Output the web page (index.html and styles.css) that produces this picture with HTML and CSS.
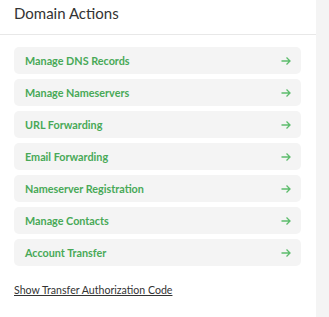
FILE: index.html
```html
<!DOCTYPE html>
<html lang="en">
<head>
    <meta charset="UTF-8">
    <title>Domain Actions</title>
    <link rel="stylesheet" href="styles.css">
</head>
<body>
    <div class="layout">
        <div class="panel">
            <div class="panel-header">Domain Actions</div>
            <ul class="action-list">
                <li class="action-item"><span>Manage DNS Records</span><svg class="arrow" viewBox="0 0 10 10"><path d="M0.5 5H9M5.5 1.5L9 5L5.5 8.5"/></svg></li>
                <li class="action-item"><span>Manage Nameservers</span><svg class="arrow" viewBox="0 0 10 10"><path d="M0.5 5H9M5.5 1.5L9 5L5.5 8.5"/></svg></li>
                <li class="action-item"><span>URL Forwarding</span><svg class="arrow" viewBox="0 0 10 10"><path d="M0.5 5H9M5.5 1.5L9 5L5.5 8.5"/></svg></li>
                <li class="action-item"><span>Email Forwarding</span><svg class="arrow" viewBox="0 0 10 10"><path d="M0.5 5H9M5.5 1.5L9 5L5.5 8.5"/></svg></li>
                <li class="action-item"><span>Nameserver Registration</span><svg class="arrow" viewBox="0 0 10 10"><path d="M0.5 5H9M5.5 1.5L9 5L5.5 8.5"/></svg></li>
                <li class="action-item"><span>Manage Contacts</span><svg class="arrow" viewBox="0 0 10 10"><path d="M0.5 5H9M5.5 1.5L9 5L5.5 8.5"/></svg></li>
                <li class="action-item"><span>Account Transfer</span><svg class="arrow" viewBox="0 0 10 10"><path d="M0.5 5H9M5.5 1.5L9 5L5.5 8.5"/></svg></li>
            </ul>
            <a class="auth-link" href="#">Show Transfer Authorization Code</a>
        </div>
        <div class="sidebar"></div>
    </div>
</body>
</html>
```

FILE: styles.css
```css
body {
    margin: 0;
    font-family: Lato, "Open Sans", sans-serif;
    background-color: #ffffff;
    color: #333333;
}
.layout {
    display: flex;
    min-height: 317px;
}
.panel {
    width: 316px;
    flex-shrink: 0;
    background-color: #ffffff;
}
.sidebar {
    flex: 1;
    background-color: #f4f4f4;
}
.panel-header {
    font-size: 15px;
    line-height: 20px;
    padding: 3px 14px 11px;
    border-bottom: 1px solid #e8e8e8;
    color: #333333;
}
.action-list {
    list-style: none;
    margin: 12px 15px 0 14px;
    padding: 0;
    display: flex;
    flex-direction: column;
    gap: 5px;
}
.action-item {
    display: flex;
    align-items: center;
    justify-content: space-between;
    height: 27px;
    padding: 0 10px 0 11px;
    background-color: #f4f4f4;
    border-radius: 5px;
    font-size: 10.8px;
    font-weight: bold;
    color: #48a957;
}
.arrow {
    width: 10px;
    height: 10px;
    fill: none;
    stroke: #5cbc6c;
    stroke-width: 1.3;
}
.auth-link {
    display: inline-block;
    margin: 16px 0 0 14px;
    font-size: 10.6px;
    line-height: 16px;
    color: #333333;
    text-decoration: underline;
}
```
